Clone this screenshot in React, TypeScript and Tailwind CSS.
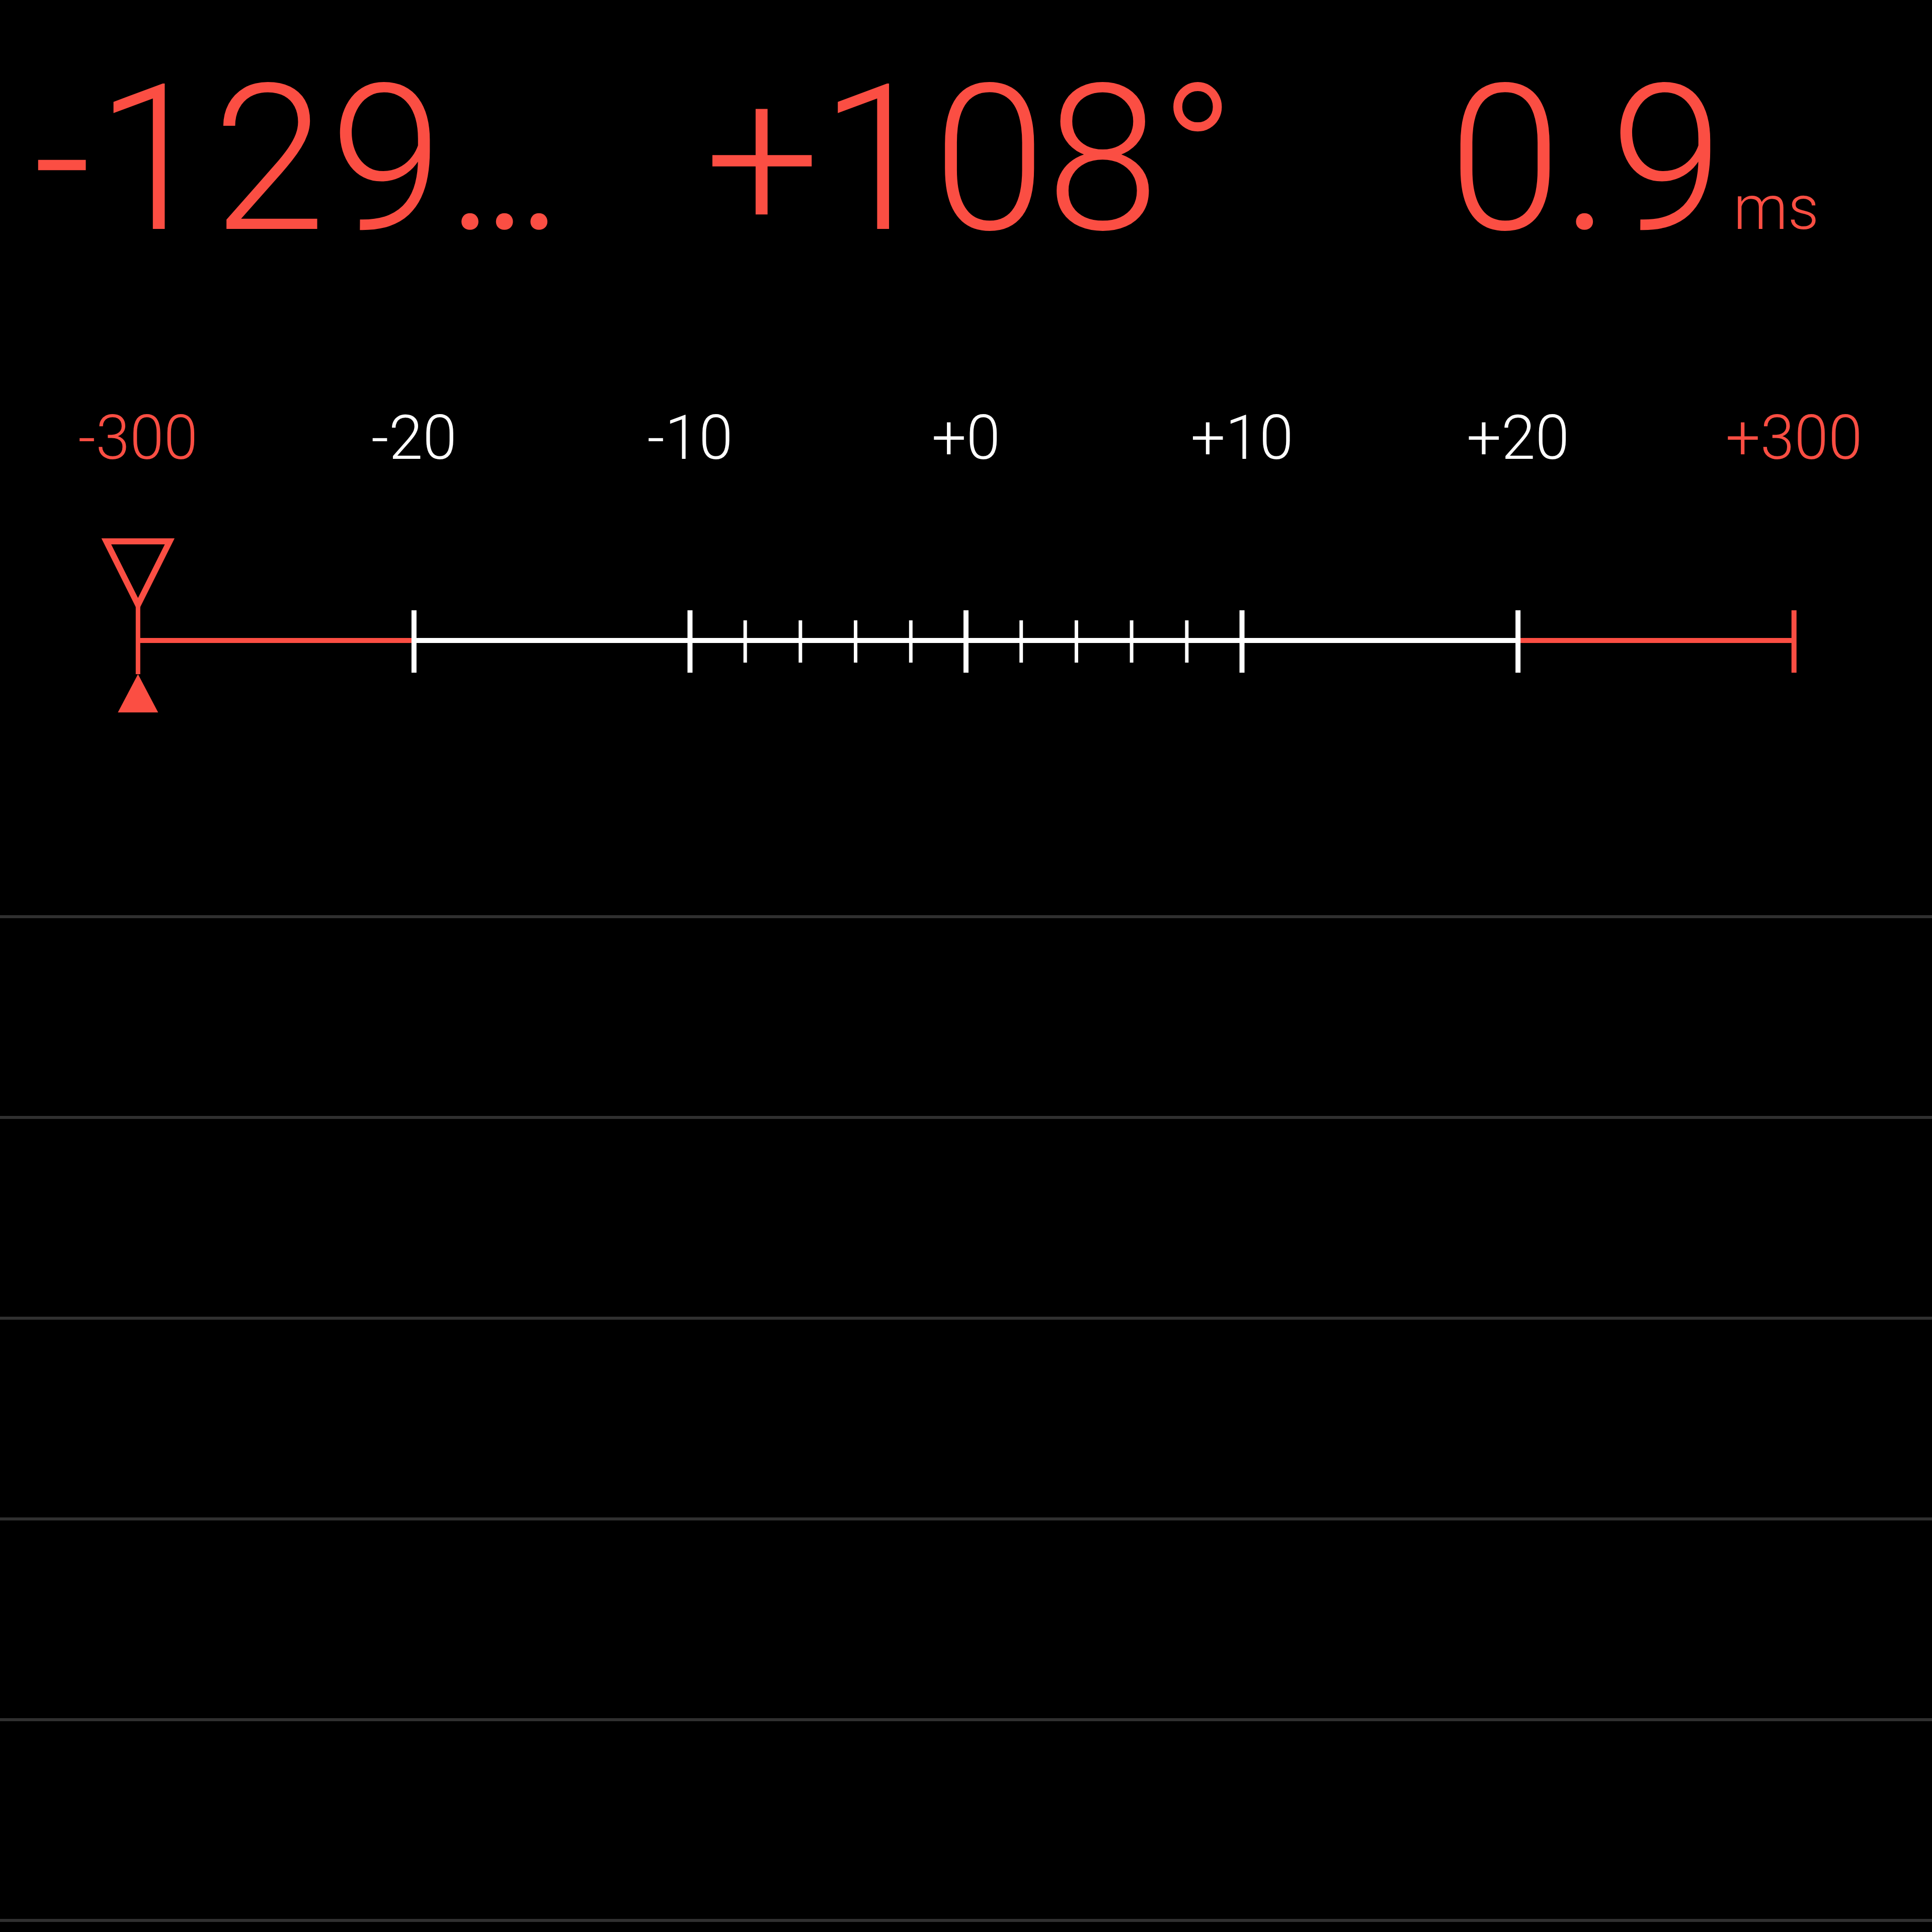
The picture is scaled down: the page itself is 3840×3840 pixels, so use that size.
import React from 'react';

const RED = '#fb4e43';

const labels = [
  { text: '-300', red: true },
  { text: '-20', red: false },
  { text: '-10', red: false },
  { text: '+0', red: false },
  { text: '+10', red: false },
  { text: '+20', red: false },
  { text: '+300', red: true },
];

const step = 3840 / 7;
const tickX = labels.map((_, i) => step * i + step / 2);

// the scale: red outer segments, white centre, finer ticks between -10 and +10
const Scale: React.FC = () => {
  const y = 223;
  const minor: number[] = [];
  for (let k = 1; k < 5; k++) {
    minor.push(tickX[2] + (step / 5) * k);
    minor.push(tickX[3] + (step / 5) * k);
  }
  return (
    <svg viewBox="0 0 3840 380" className="block w-[3840px] h-[380px]">
      <line x1={tickX[0]} y1={y} x2={tickX[1]} y2={y} stroke={RED} strokeWidth={10} />
      <line x1={tickX[1]} y1={y} x2={tickX[5]} y2={y} stroke="#fff" strokeWidth={10} />
      <line x1={tickX[5]} y1={y} x2={tickX[6]} y2={y} stroke={RED} strokeWidth={10} />
      {tickX.slice(1, 6).map((x) => (
        <line key={x} x1={x} y1={163} x2={x} y2={287} stroke="#fff" strokeWidth={10} />
      ))}
      {minor.map((x) => (
        <line key={x} x1={x} y1={183} x2={x} y2={267} stroke="#fff" strokeWidth={7} />
      ))}
      <line x1={tickX[6]} y1={163} x2={tickX[6]} y2={287} stroke={RED} strokeWidth={10} />

      {/* needle marker */}
      <line x1={tickX[0]} y1={150} x2={tickX[0]} y2={290} stroke={RED} strokeWidth={9} />
      <path
        d={`M ${tickX[0] - 63} 26 L ${tickX[0] + 63} 26 L ${tickX[0]} 152 Z`}
        fill="none"
        stroke={RED}
        strokeWidth={12}
        strokeLinejoin="miter"
      />
      <path d={`M ${tickX[0] - 40} 366 L ${tickX[0] + 40} 366 L ${tickX[0]} 290 Z`} fill={RED} />
    </svg>
  );
};

export default function App() {
  return (
    <div
      className="min-h-screen w-[3840px] bg-black overflow-hidden"
      style={{ fontFamily: 'Roboto, "Helvetica Neue", "Liberation Sans", sans-serif' }}
    >
      {/* readouts */}
      <div className="flex pt-[114px] pl-[66px] h-[519px] text-[405px] leading-none font-light text-[#fb4e43] whitespace-nowrap">
        <div className="w-[1335px] tracking-[0.02em]">
          -129<span className="tracking-[-0.07em]">...</span>
        </div>
        <div className="w-[1478px]">+108°</div>
        <div className="flex items-baseline">
          <span>0.9</span>
          <span className="ml-[20px] text-[122px]">ms</span>
        </div>
      </div>

      {/* scale labels */}
      <div className="grid grid-cols-7 mt-[291px] h-[122px] text-[122px] leading-none font-light">
        {labels.map((l) => (
          <div key={l.text} className={`text-center ${l.red ? 'text-[#fb4e43]' : 'text-white'}`}>
            {l.text}
          </div>
        ))}
      </div>

      <div className="mt-[118px]">
        <Scale />
      </div>

      {/* empty list rows */}
      <div className="mt-[389px] flex flex-col">
        {[0, 1, 2, 3, 4].map((i) => (
          <div key={i} className="h-[399px] border-t-[6px] border-[#303030]" />
        ))}
        <div className="h-[6px] bg-[#303030]" />
      </div>
    </div>
  );
}
